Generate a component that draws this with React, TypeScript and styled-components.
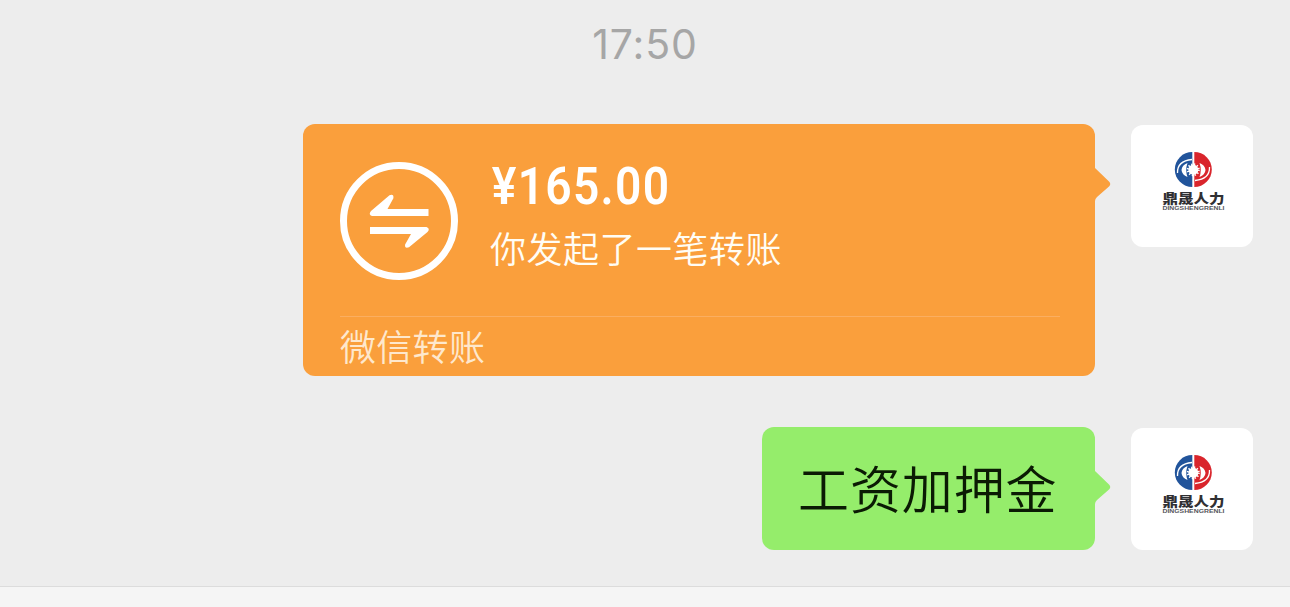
import React from 'react'
import styled, { createGlobalStyle } from 'styled-components'

const GlobalStyle = createGlobalStyle`
	body {
		margin: 0;
		background-color: #ededed;
	}
	* {
		box-sizing: border-box;
	}
`

const cjk = `'Noto Sans CJK SC', sans-serif`

const Chat = styled.main`
	display: flex;
	flex-direction: column;
	height: 607px;
	overflow: hidden;
	font-family: ${cjk};
	background-color: #ededed;
`

const Time = styled.time`
	flex-shrink: 0;
	height: 124px;
	padding-top: 18px;
	text-align: center;
	font-family: Inter, sans-serif;
	font-size: 41px;
	line-height: 52px;
	letter-spacing: 0.9px;
	color: #a6a6a6;
`

const Message = styled.div`
	display: flex;
	flex-shrink: 0;
	justify-content: flex-end;
	align-items: flex-start;
	gap: 36px;
	padding-right: 37px;

	& + & {
		margin-top: 51px;
	}
`

const Bubble = styled.div<{ $color: string }>`
	position: relative;
	border-radius: 12px;
	background-color: ${({ $color }) => $color};
`

const TailShape = styled.svg`
	position: absolute;
	top: 43px;
	left: 100%;
	margin-left: -1px;
`

const TransferBubble = styled(Bubble)`
	width: 792px;
	height: 252px;
	padding: 0 35px 0 37px;
	color: #fffdf5;
`

const TransferInfo = styled.div`
	display: flex;
	height: 192px;
	padding-top: 38px;
	gap: 32px;
`

const Amount = styled.div`
	width: max-content;
	padding-left: 2px;
	font-family: Roboto, sans-serif;
	font-size: 51px;
	font-weight: 600;
	line-height: 49px;
	letter-spacing: 1.4px;
	color: #fff;
	transform: scaleX(0.905);
	transform-origin: left;
`

const Description = styled.div`
	font-size: 36px;
	font-weight: 350;
	line-height: 52px;
	letter-spacing: 0.5px;
	margin-top: 10px;
`

const TransferLabel = styled.div`
	border-top: 1px solid #fbae60;
	font-size: 36px;
	font-weight: 350;
	line-height: 57px;
	letter-spacing: 0.3px;
	color: #fee8cd;
`

const TextBubble = styled(Bubble)`
	width: 333px;
	height: 123px;
	padding: 0 0 0 36px;
	font-size: 51px;
	font-weight: 350;
	line-height: 121px;
	letter-spacing: 0.9px;
	white-space: nowrap;
	color: #0b1b04;
`

const AvatarFrame = styled.div`
	width: 122px;
	height: 122px;
	margin-top: 1px;
	border-radius: 12px;
	background-color: #fff;
	svg {
		display: block;
	}
`

const InputBar = styled.footer`
	flex-shrink: 0;
	height: 21px;
	margin-top: auto;
	border-top: 1px solid #dcdcdc;
	background-color: #f5f5f5;
`

const Tail = ({ color }: { color: string }) => (
	<TailShape width="17" height="34" viewBox="0 0 17 34">
		<path d="M0 0L1 1L15 14.500Q17.500 17 15 19.500L3 30Q1 32 1 34H0Z" fill={color} />
	</TailShape>
)

const TransferIcon = () => (
	<svg width="118" height="118" viewBox="0 0 118 118">
		<circle cx="59" cy="59" r="55.5" fill="none" stroke="#fff" strokeWidth="7" />
		<path
			d="M88.500 47V54H32Q28 52.500 31 49L49.500 33.200Q54 31.500 53.400 36.200L47.500 47Z"
			fill="#fff"
		/>
		<path
			d="M30 72V65H86.500Q90.500 66.500 87.500 70L69 85.300Q64.500 87 65.100 82.500L71 72Z"
			fill="#fff"
		/>
	</svg>
)

const Avatar = () => (
	<AvatarFrame>
		<svg width="122" height="122" viewBox="0 0 122 122">
			<path d="M61.300 27A17.500 17.500 0 0 0 61.300 62Z" fill="#21549b" />
			<path d="M63.300 27A17.500 17.500 0 0 1 63.300 62Z" fill="#d9252c" />
			<circle cx="62.3" cy="44.800" r="5" fill="#fff" />
			<circle
				cx="62.3"
				cy="44.800"
				r="5.500"
				fill="none"
				stroke="#fff"
				strokeWidth="2"
				strokeDasharray="1.300 1.580"
			/>
			<path
				d="M56.500 38Q51 40 50.500 45Q51 50 56.500 52Q54 45 56.500 38Z M68.500 38Q74 40 74.500 45Q74 50 68.500 52Q71 45 68.500 38Z"
				fill="#fff"
			/>
			<path
				d="M46.500 48Q46 36 61 34.500M78.500 42Q79 54 64 55.500"
				fill="none"
				stroke="#fff"
				strokeWidth="1.300"
			/>
			<text
				x="31.500"
				y="77.500"
				fontFamily={cjk}
				fontSize="13"
				fontWeight="900"
				textLength="62"
				lengthAdjust="spacingAndGlyphs"
				fill="#303033"
			>
				鼎晟人力
			</text>
			<text
				x="31.500"
				y="85.300"
				fontFamily="'Liberation Sans', sans-serif"
				fontSize="5.600"
				fontWeight="700"
				textLength="62"
				lengthAdjust="spacingAndGlyphs"
				fill="#55555a"
			>
				DINGSHENGRENLI
			</text>
		</svg>
	</AvatarFrame>
)

const App = () => (
	<>
		<GlobalStyle />
		<Chat>
			<Time>17:50</Time>
			<Message>
				<TransferBubble $color="#fa9f3c">
					<TransferInfo>
						<TransferIcon />
						<div>
							<Amount>¥165.00</Amount>
							<Description>你发起了一笔转账</Description>
						</div>
					</TransferInfo>
					<TransferLabel>微信转账</TransferLabel>
					<Tail color="#fa9f3c" />
				</TransferBubble>
				<Avatar />
			</Message>
			<Message>
				<TextBubble $color="#95ed6b">
					工资加押金
					<Tail color="#95ed6b" />
				</TextBubble>
				<Avatar />
			</Message>
			<InputBar />
		</Chat>
	</>
)

export default App
